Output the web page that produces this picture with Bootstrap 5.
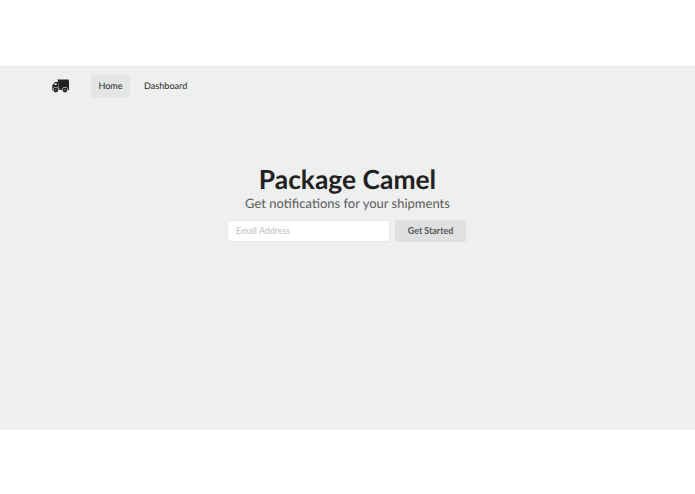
<!DOCTYPE html>
<html lang="en">
<head>
<meta charset="utf-8">
<title>Package Camel</title>
<link href="https://cdn.jsdelivr.net/npm/bootstrap@5.3.0/dist/css/bootstrap.min.css" rel="stylesheet">
<style>
html,body{height:100%;background:#fff;font-family:Lato,sans-serif;text-rendering:geometricPrecision}
.stage{margin-top:66px;height:364px;background:#eeefef;border-top:1px solid #e6e7e7}
.topbar{height:38px;padding-left:52px}
.brand-ico{width:17px;height:14px;margin-right:22px;display:block}
.nav-itm{font-size:9.1px;line-height:22px;height:23px;padding:0 8px;color:#2a2a2a;text-decoration:none;border-radius:2px;font-weight:400}
.nav-itm.on{background:#e4e5e5;width:39px;text-align:center;padding:0}
.nav-itm+.nav-itm{margin-left:6px}
.hero-title{font-size:26.4px;font-weight:700;line-height:32px;color:#212121;margin:0}
.hero-sub{font-size:13px;line-height:16px;color:#5c5c5c;margin:0}
.mail{width:163px;height:22px;background:#fff;border:1px solid #e8e8e8;border-radius:2px;font-size:8.9px;padding:0 8px 2px;color:#222;font-family:Lato,sans-serif}
.mail::placeholder{color:#bdbdbd;opacity:1}
.go{width:71px;height:22px;background:#dfe0e1;border:0;border-radius:2px;font-size:8.9px;font-weight:700;color:#555;padding:0}
.hero{padding-top:58px}
.signup{gap:5px;margin-top:9px;padding-right:2px}
</style>
</head>
<body>
<div class="stage">
  <nav class="topbar d-flex align-items-center">
    <svg class="brand-ico" viewBox="0 0 17 14" aria-label="truck">
      <path fill="#222" d="M5.5 .5H16a1 1 0 0 1 1 1V11h-9.5z"/>
      <path fill="#222" d="M6 3H3L.6 6a1 1 0 0 0-.3.7V11.5H7z"/>
      <circle cx="3.8" cy="11" r="2.9" fill="#eeefef"/><circle cx="13" cy="11" r="2.9" fill="#eeefef"/>
      <circle cx="3.8" cy="11" r="2.4" fill="#222"/><circle cx="13" cy="11" r="2.4" fill="#222"/>
      <circle cx="3.8" cy="11" r=".7" fill="#9a9a9a"/><circle cx="13" cy="11" r=".7" fill="#9a9a9a"/>
      <path fill="#eeefef" d="M3.2 4.2h1.4v1.9H1.8z"/>
    </svg>
    <a class="nav-itm on" href="#">Home</a>
    <a class="nav-itm" href="#">Dashboard</a>
  </nav>
  <main class="hero text-center">
    <h1 class="hero-title">Package Camel</h1>
    <p class="hero-sub">Get notifications for your shipments</p>
    <form class="signup d-flex justify-content-center">
      <input class="mail" type="text" placeholder="Email Address">
      <button class="go" type="button">Get Started</button>
    </form>
  </main>
</div>
<script src="https://cdn.jsdelivr.net/npm/bootstrap@5.3.0/dist/js/bootstrap.bundle.min.js"></script>
</body>
</html>
